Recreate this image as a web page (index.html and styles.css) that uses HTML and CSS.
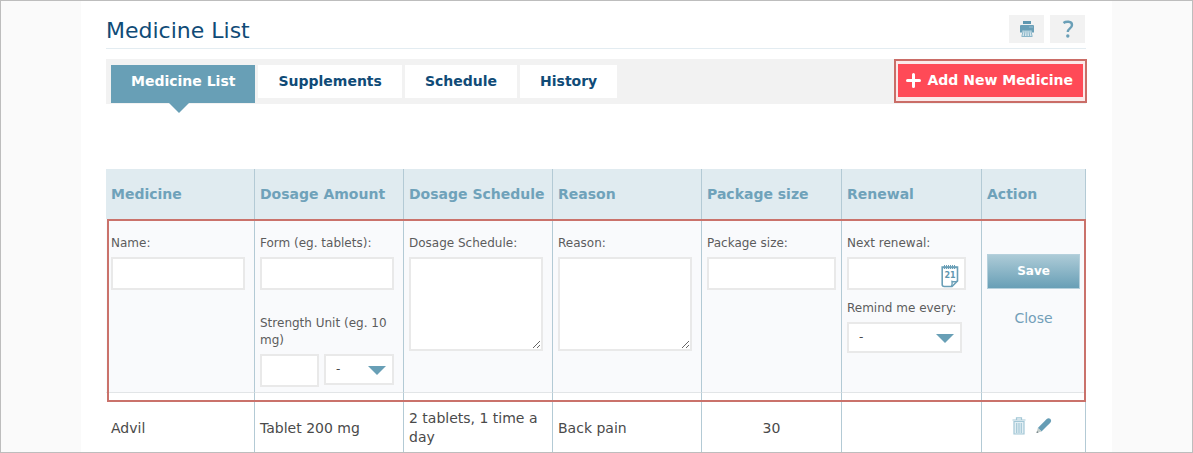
FILE: index.html
```html
<!DOCTYPE html>
<html lang="en">
<head>
<meta charset="utf-8">
<title>Medicine List</title>
<link rel="stylesheet" href="styles.css">
</head>
<body>
<main class="page">
  <header class="header">
    <h1 class="title">Medicine List</h1>
    <div class="tools">
      <button class="tool" type="button" aria-label="Print">
        <svg width="16" height="18" viewBox="0 0 16 18" aria-hidden="true">
          <path fill="#5f97b0" d="M4 1h8v3H4z"/>
          <path fill="#6a9fb7" d="M2 5h12a1 1 0 0 1 1 1v6.500h-2L12 10H4l-1 2.500H1V6a1 1 0 0 1 1-1z"/>
          <path fill="#c2dbe5" d="M10.500 6.500h1v1h-1zM12.500 6.500h1v1h-1z"/>
          <path fill="#d5e6ed" stroke="#8ab6c9" d="M4.200 10.500h7.600l1.400 6H2.800z"/>
          <path stroke="#8ab6c9" d="M6 11l-.6 5M8 11v5M10 11l.6 5" fill="none"/>
        </svg>
      </button>
      <button class="tool" type="button" aria-label="Help">
        <svg width="12" height="18" viewBox="0 0 12 18" aria-hidden="true">
          <path fill="none" stroke="#6a9fb7" stroke-width="2.400" d="M1.500 3C3.500 1.500 10 .6 10 5c0 3.500-4.200 3.200-4.200 7"/>
          <circle cx="5.800" cy="16" r="1.700" fill="#6a9fb7"/>
        </svg>
      </button>
    </div>
  </header>

  <div class="bar">
    <nav class="tabs">
      <a class="tab tab-active" href="#list">Medicine List</a>
      <a class="tab" href="#supplements">Supplements</a>
      <a class="tab" href="#schedule">Schedule</a>
      <a class="tab" href="#history">History</a>
    </nav>
    <div class="add-frame">
      <button class="add" type="button">
        <svg width="15" height="15" viewBox="0 0 15 15" aria-hidden="true"><path d="M7.500 1.500v12M1.500 7.500h12" stroke="#fff" stroke-width="3" stroke-linecap="round"/></svg>
        Add New Medicine
      </button>
    </div>
  </div>

  <table class="list">
    <colgroup>
      <col class="col-wide"><col class="col-wide"><col class="col-wide"><col class="col-wide">
      <col class="col-mid"><col class="col-mid"><col>
    </colgroup>
    <thead>
      <tr>
        <th>Medicine</th><th>Dosage Amount</th><th>Dosage Schedule</th><th>Reason</th>
        <th>Package size</th><th>Renewal</th><th>Action</th>
      </tr>
    </thead>
    <tbody>
      <tr class="form-row">
        <td>
          <label class="label" for="name">Name:</label>
          <input class="field" id="name" type="text">
        </td>
        <td>
          <label class="label" for="form">Form (eg. tablets):</label>
          <input class="field" id="form" type="text">
          <label class="label label-strength" for="strength">Strength Unit (eg. 10 mg)</label>
          <div class="strength">
            <input class="field strength-value" id="strength" type="text">
            <span class="select strength-unit"><select class="field" aria-label="Unit"><option>-</option></select></span>
          </div>
        </td>
        <td>
          <label class="label" for="schedule">Dosage Schedule:</label>
          <textarea class="field area" id="schedule"></textarea>
        </td>
        <td>
          <label class="label" for="reason">Reason:</label>
          <textarea class="field area" id="reason"></textarea>
        </td>
        <td class="cell-package">
          <label class="label" for="package">Package size:</label>
          <input class="field" id="package" type="text">
        </td>
        <td class="cell-renewal">
          <label class="label" for="renewal">Next renewal:</label>
          <div class="date">
            <input class="field" id="renewal" type="text">
            <svg class="calendar" width="18" height="24" viewBox="0 0 18 24" aria-hidden="true">
              <path fill="#fff" stroke="#6a9fb7" stroke-width="1.600" d="M1.200 3v17.500q0 2 2 2H11l5.500-5.500V3z"/>
              <path fill="none" stroke="#6a9fb7" stroke-width="1.400" d="M10.500 22.500q1-2 .5-5 3 .8 5.500-.5M2 3.500h14"/>
              <path stroke="#6a9fb7" stroke-width="1" d="M3.500 1v4M5.500 1v4M7.500 1v4M9.500 1v4M11.500 1v4M13.500 1v4"/>
              <text class="calendar-day" x="9" y="14" text-anchor="middle">21</text>
            </svg>
          </div>
          <label class="label label-remind" for="remind">Remind me every:</label>
          <span class="select remind"><select class="field" id="remind"><option>-</option></select></span>
        </td>
        <td class="cell-action">
          <button class="save" type="button">Save</button>
          <a class="close" href="#close">Close</a>
        </td>
      </tr>
      <tr class="item">
        <td>Advil</td>
        <td>Tablet 200 mg</td>
        <td>2 tablets, 1 time a day</td>
        <td>Back pain</td>
        <td class="center">30</td>
        <td></td>
        <td>
          <div class="actions">
            <button class="icon" type="button" aria-label="Delete">
              <svg width="14" height="18" viewBox="0 0 14 18" aria-hidden="true">
                <path fill="#e3eff4" stroke="#a3c7d6" stroke-width="1.200" d="M2 4.500h10V17H2z"/>
                <path fill="none" stroke="#a3c7d6" stroke-width="1.200" d="M.5 3h13M4.500 3V.8h5V3M4.700 6v10M7 6v10M9.300 6v10"/>
              </svg>
            </button>
            <button class="icon" type="button" aria-label="Edit">
              <svg width="16" height="17" viewBox="0 0 16 17" aria-hidden="true">
                <path fill="#669db5" d="M1.800 11 10.700 2Q12.500.3 14.500 2q1.500 2-.2 3.800L5.500 14.500z"/>
                <path fill="#c3cdcb" d="M1.800 11 .5 16l5-1.500z"/>
                <path fill="#68767c" d="M1 14 .5 16l2-.6z"/>
              </svg>
            </button>
          </div>
        </td>
      </tr>
    </tbody>
  </table>
</main>
</body>
</html>
```

FILE: styles.css
```css
* { box-sizing: border-box; }

body {
  margin: 0;
  height: 100vh;
  overflow: hidden;
  border: 1px solid #bdbdbd;
  background: #fafafa;
  color: #4a4a4a;
  font: 14px/19px Verdana, "DejaVu Sans", sans-serif;
}

button, input, select, textarea { font: inherit; color: inherit; margin: 0; }

.page {
  max-width: 1031px;
  min-height: 100%;
  margin: 0 auto;
  padding: 0 26px 0 25px;
  background: #fff;
}

.header {
  display: flex;
  justify-content: space-between;
  align-items: center;
  padding: 14px 1px 5px 0;
  border-bottom: 1px solid #e3ecf1;
}
.title { margin: 0; font-size: 22px; line-height: 24px; font-weight: normal; color: #104b77; padding-top: 4px; }
.tools { display: flex; gap: 6px; }
.tool {
  display: flex;
  align-items: center;
  justify-content: center;
  width: 35px;
  height: 28px;
  padding: 0;
  border: 0;
  background: #f2f2f2;
}

.bar {
  display: flex;
  justify-content: space-between;
  height: 45px;
  margin-top: 10px;
  background: #f2f2f2;
}
.tabs { display: flex; align-items: flex-start; gap: 3px; padding: 6px 0 0 5px; }
.tab {
  padding: 0 20px;
  background: #fff;
  color: #104b77;
  font-weight: bold;
  line-height: 33px;
  text-decoration: none;
}
.tab-active { position: relative; padding-bottom: 5px; background: #689fb6; color: #fff; }
.tab-active::after {
  content: "";
  position: absolute;
  top: 100%;
  left: 50%;
  margin-left: -14px;
  border: 10px solid transparent;
  border-top-color: #689fb6;
  border-bottom: 0;
}
.add-frame {
  align-self: flex-start;
  margin-right: -1px;
  padding: 3px 2px 4px;
  border: 2px solid #ca6d67;
  background: #fbe9e9;
}
.add {
  display: flex;
  align-items: center;
  gap: 6px;
  height: 33px;
  padding: 0 10px 0 8px;
  border: 0;
  background: #ff4a57;
  color: #fff;
  font-weight: bold;
  white-space: nowrap;
}

.list {
  width: 100%;
  margin-top: 65px;
  table-layout: fixed;
  border-collapse: separate;
  border-spacing: 0;
}
.col-wide { width: 149px; }
.col-mid { width: 140px; }
th {
  height: 50px;
  padding: 0 0 0 5px;
  border-right: 1px solid #b3cad5;
  background: #e0ebf0;
  color: #6fa2ba;
  text-align: left;
  white-space: nowrap;
}
td { padding: 0 9px 0 5px; border-right: 1px solid #b3cad5; }

.form-row { position: relative; }
.form-row td:first-child::after {
  content: "";
  position: absolute;
  inset: 0 0 -9px 1px;
  border: 2px solid #ca726b;
  pointer-events: none;
}
.form-row td {
  padding-top: 16px;
  padding-bottom: 5px;
  border-bottom: 1px solid #e2e5e7;
  background: #f9fafc;
  vertical-align: top;
}
.form-row .cell-package { padding-right: 5px; }
.form-row .cell-renewal { padding-right: 15px; }
.form-row .cell-action { padding: 35px 5px 5px; text-align: center; }

.label { display: block; margin-bottom: 5px; font-size: 12px; line-height: 17px; color: #5c5c5c; }
.label-strength { margin-top: 25px; margin-right: -9px; }
.label-remind { margin-top: 10px; }
.field {
  display: block;
  width: 100%;
  height: 33px;
  padding: 0 6px;
  border: 2px solid #e9e9e9;
  border-radius: 0;
  background: #fff;
}
.area { height: 94px; padding: 4px; resize: both; }
.strength { display: flex; align-items: flex-start; gap: 5px; }
.strength-value { width: 59px; }
.strength-unit { flex: 1; }

.select { position: relative; display: block; }
.select .field { height: 31px; padding: 0 10px; appearance: none; font-size: 12px; }
.select::after {
  content: "";
  position: absolute;
  top: 12px;
  right: 8px;
  border: 9px solid transparent;
  border-top-color: #689fb6;
  border-bottom: 0;
  pointer-events: none;
}
.remind { margin-right: 4px; }

.date { position: relative; }
.calendar { position: absolute; top: 7px; right: 7px; }
.calendar-day { font-size: 8px; font-weight: bold; fill: #5f97b0; }

.save {
  display: block;
  width: 100%;
  height: 35px;
  padding: 0;
  border: 1px solid #b5d0dc;
  background: linear-gradient(#adcbd7, #689fb6);
  color: #fff;
  font-size: 12px;
  font-weight: bold;
}
.close { display: block; margin-top: 20px; color: #739fb9; text-decoration: none; }

.item td { height: 70px; }
.item .center { padding: 0; text-align: center; }
.actions { display: flex; justify-content: center; gap: 10px; padding-bottom: 4px; }
.icon { display: flex; padding: 0; border: 0; background: none; }
```
